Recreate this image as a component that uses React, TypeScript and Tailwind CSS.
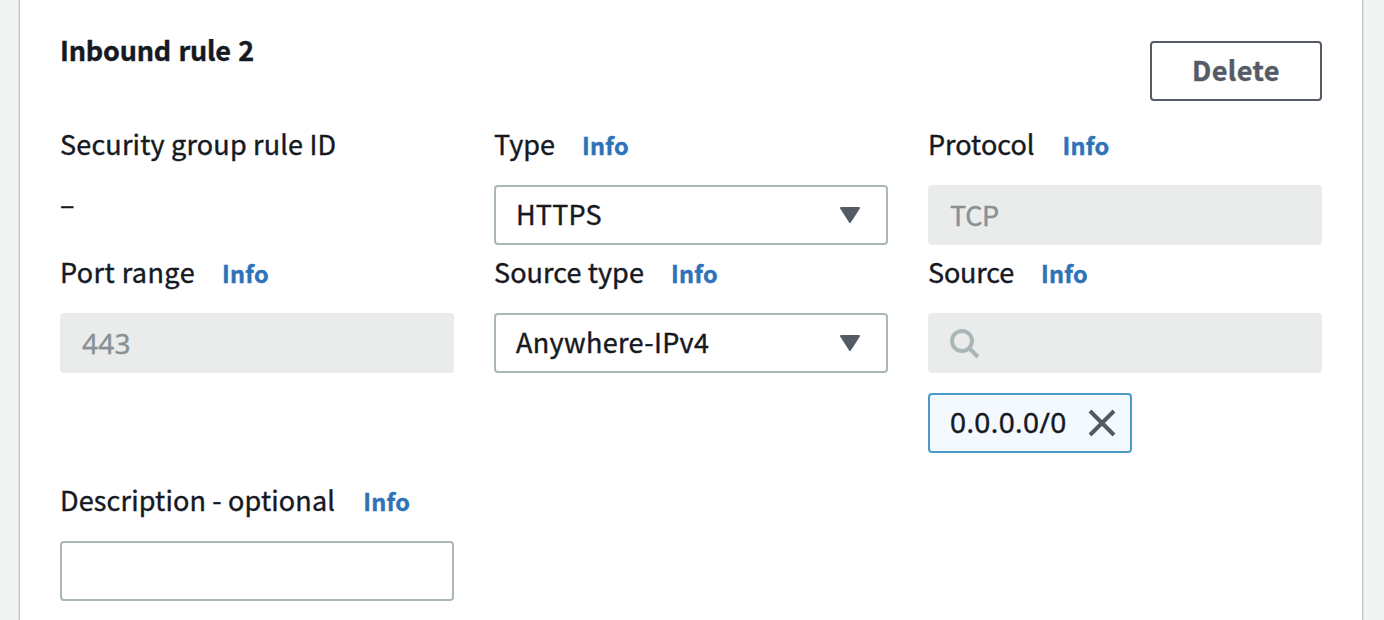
import type { ReactNode } from "react";

function Label({ children, className = "", info = true, gap = "ml-[27px]" }: { children: ReactNode; className?: string; info?: boolean; gap?: string }) {
  return (
    <div className="flex h-10 items-baseline leading-10 whitespace-nowrap">
      <span className={className}>{children}</span>
      {info && <a className={`text-[23.5px] leading-10 font-bold tracking-[0.25px] text-[#2e73b8] ${gap}`}>Info</a>}
    </div>
  );
}

function Select({ children, className }: { children: ReactNode; className: string }) {
  return (
    <div className="mt-[21px] flex h-[60px] items-center justify-between rounded-[4px] border-2 border-[#aab7b8] bg-white pr-[26px] pl-5">
      <span className={`pb-0.5 leading-10 ${className}`}>{children}</span>
      <svg width="20" height="16" viewBox="0 0 20 16" fill="#545b64" stroke="#545b64" strokeWidth="2" strokeLinejoin="round">
        <path d="M1 1h18l-9 14z" />
      </svg>
    </div>
  );
}

function Disabled({ children, className = "" }: { children: ReactNode; className?: string }) {
  return (
    <div className="mt-[21px] flex h-[60px] items-center rounded-[4px] bg-[#eaeceb] pl-[22px] text-[#879196]">
      <div className={`leading-10 ${className}`}>{children}</div>
    </div>
  );
}

export default function App() {
  return (
    <div className="h-[620px] overflow-hidden bg-[#f2f3f3] pr-[22px] pl-5 font-['Noto_Sans_CJK_SC','Noto_Sans',sans-serif] text-[27px] text-[#16191f] [-webkit-text-stroke:0.4px_currentColor]">
      <main className="h-full bg-white px-10 shadow-[0_0_0_1px_#c3c6cd,0_0_0_2px_#dfe2e4]">
        <header className="flex h-[124px] items-start justify-between">
          <h2 className="mt-[30px] leading-10 font-bold tracking-[-0.2px] [word-spacing:1.5px]">Inbound rule 2</h2>
          <button className="mt-[41px] flex h-[60px] w-[172px] items-center justify-center rounded-[4px] border-2 border-[#545b64] bg-white pb-0.5 leading-10 font-bold tracking-[0.4px] text-[#545b64]">Delete</button>
        </header>
        <div className="grid grid-cols-[394px_394px_394px] gap-x-10">
          <div className="h-32">
            <Label info={false} className="tracking-[0.18px]">Security group rule ID</Label>
            <div className="mt-5 leading-10">–</div>
          </div>
          <div className="h-32">
            <Label>Type</Label>
            <Select className="tracking-[0.2px]">HTTPS</Select>
          </div>
          <div className="h-32">
            <Label gap="ml-[28px]">Protocol</Label>
            <Disabled className="tracking-[-0.3px]">TCP</Disabled>
          </div>
          <div>
            <Label className="tracking-[0.44px]">Port range</Label>
            <Disabled className="font-['Noto_Sans',sans-serif] text-[28px] tracking-[0.2px]">443</Disabled>
          </div>
          <div>
            <Label className="tracking-[0.08px]">Source type</Label>
            <Select className="tracking-[0.35px]">Anywhere-IPv4</Select>
          </div>
          <div>
            <Label className="tracking-[-0.2px]">Source</Label>
            <Disabled>
              <svg className="mt-px block" width="30" height="30" viewBox="0 0 30 30" fill="none" stroke="#aab7b8" strokeWidth="4">
                <circle cx="12" cy="12" r="10" />
                <path d="M19 19l9 9" />
              </svg>
            </Disabled>
            <div className="mt-5 flex h-[60px] w-[204px] items-center justify-between rounded-[4px] border-2 border-[#4a9bc7] bg-[#f3f9ff] pr-3.5 pl-5">
              <span className="pb-0.5 font-['Noto_Sans',sans-serif] text-[28px] leading-10 tracking-[0.4px]">0.0.0.0/0</span>
              <svg width="28" height="28" viewBox="0 0 28 28" fill="none" stroke="#545b5e" strokeWidth="4">
                <path d="M2 2l24 24M26 2L2 26" />
              </svg>
            </div>
          </div>
          <div className="mt-[27px]">
            <Label gap="ml-[28px]" className="tracking-[0.15px]">Description - optional</Label>
            <div className="mt-[21px] h-[60px] rounded-[4px] border-2 border-[#aab7b8] bg-white" />
          </div>
        </div>
      </main>
    </div>
  );
}
